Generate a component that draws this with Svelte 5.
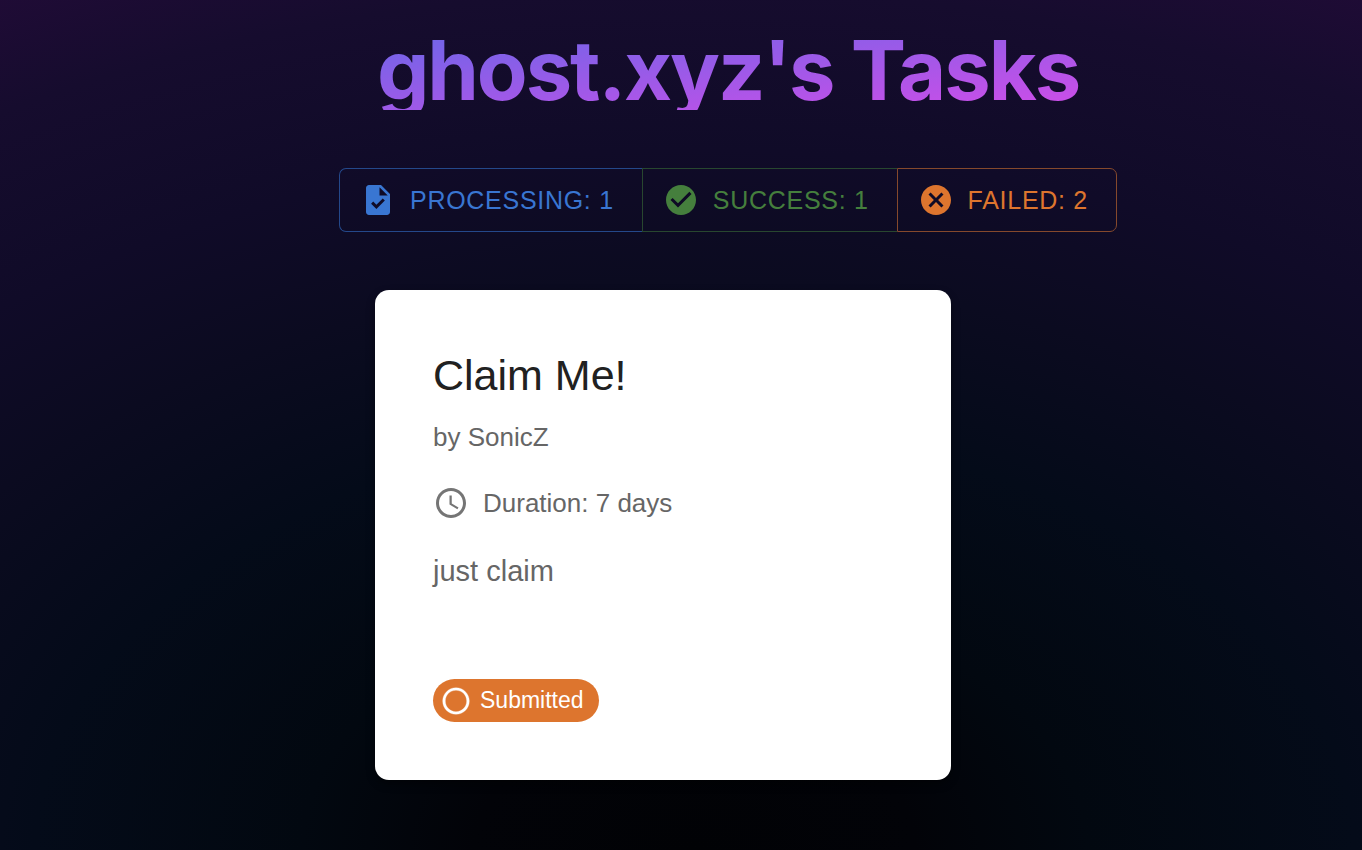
<script>
  const stats = [
    { label: 'Processing', count: 1, kind: 'processing', icon: 'M14 2H6c-1.1 0-1.990.9-1.990 2L4 20c0 1.1.890 2 1.990 2H18c1.1 0 2-.9 2-2V8l-6-6zm-3.060 16L7.400 14.460l1.410-1.410 2.120 2.120 4.240-4.240 1.410 1.410L10.940 18zM13 9V3.500L18.500 9H13z' },
    { label: 'Success', count: 1, kind: 'success', icon: 'M12 2C6.480 2 2 6.480 2 12s4.480 10 10 10 10-4.480 10-10S17.520 2 12 2zm-2 15l-5-5 1.410-1.410L10 14.170l7.590-7.590L19 8l-9 9z' },
    { label: 'Failed', count: 2, kind: 'failed', icon: 'M12 2C6.470 2 2 6.470 2 12s4.470 10 10 10 10-4.470 10-10S17.530 2 12 2zm5 13.590L15.590 17 12 13.410 8.410 17 7 15.590 10.590 12 7 8.410 8.410 7 12 10.590 15.590 7 17 8.410 13.410 12 17 15.590z' }
  ];
</script>

<main>
  <h1>ghost.xyz's Tasks</h1>

  <div class="stats" role="group" aria-label="Task totals">
    {#each stats as stat}
      <button class={stat.kind} type="button">
        <svg viewBox="0 0 24 24" aria-hidden="true"><path d={stat.icon} /></svg>
        <span>{stat.label}: {stat.count}</span>
      </button>
    {/each}
  </div>

  <section class="tasks">
    <article>
      <h2>Claim Me!</h2>
      <p class="author">by SonicZ</p>
      <p class="duration">
        <svg viewBox="0 0 24 24" aria-hidden="true">
          <path d="M11.990 2C6.470 2 2 6.480 2 12s4.470 10 9.990 10C17.520 22 22 17.520 22 12S17.520 2 11.990 2zM12 20c-4.420 0-8-3.580-8-8s3.580-8 8-8 8 3.580 8 8-3.580 8-8 8z" />
          <path d="M12.500 7H11v6l5.250 3.150.750-1.230-4.500-2.670z" />
        </svg>
        <span>Duration: 7 days</span>
      </p>
      <p class="description">just claim</p>
      <div class="chip">
        <svg viewBox="0 0 24 24" aria-hidden="true">
          <path d="M12 2C6.480 2 2 6.480 2 12s4.480 10 10 10 10-4.480 10-10S17.520 2 12 2zm0 18c-4.420 0-8-3.580-8-8s3.580-8 8-8 8 3.580 8 8-3.580 8-8 8z" />
        </svg>
        <span>Submitted</span>
      </div>
    </article>
  </section>
</main>

<style>
  :global(body) {
    margin: 0;
    background: #000;
  }

  main {
    box-sizing: border-box;
    min-height: 100vh;
    padding: 30px 0 70px 94px;
    display: flex;
    flex-direction: column;
    align-items: center;
    font-family: "Liberation Sans", Helvetica, Arial, sans-serif;
    background: radial-gradient(ellipse 1570px 1000px at 51% 100%, #010205 0%, #020308 14%, #020810 25%, #040b19 42%, #0b0b20 57%, #100b28 70%, #160c2e 86%, #220b38 99%);
  }

  h1, h2, p {
    margin: 0;
  }

  h1 {
    font: 700 83px/80px Inter, sans-serif;
    letter-spacing: -0.025em;
    color: transparent;
    background: linear-gradient(to bottom right, #6b66e8, #cf4de8);
    background-clip: text;
    -webkit-background-clip: text;
  }

  .stats {
    display: flex;
    margin: 58px 0;
  }

  button {
    display: flex;
    align-items: center;
    gap: 14px;
    height: 64px;
    padding: 0 28px 0 20px;
    border: 1px solid;
    background: none;
    font: 400 25px/44px "Liberation Sans", Helvetica, Arial, sans-serif;
    letter-spacing: 0.02857em;
    text-transform: uppercase;
  }

  button:not(:last-child) {
    border-right: 0;
  }

  button:first-child {
    border-radius: 7px 0 0 7px;
  }

  button:last-child {
    border-radius: 0 7px 7px 0;
  }

  .processing {
    color: #3976d2;
    border-color: #24488a;
  }

  .success {
    color: #457f3d;
    border-color: #28472f;
  }

  .failed {
    color: #dd752e;
    border-color: #85492c;
  }

  svg {
    flex: none;
    width: 36px;
    height: 36px;
    fill: currentColor;
  }

  .tasks {
    width: 100%;
    max-width: 706px;
  }

  article {
    box-sizing: border-box;
    max-width: 576px;
    padding: 56px 58px 58px;
    border-radius: 14px;
    background: #fff;
    color: #666;
    box-shadow: 0 4px 8px rgb(0 0 0 / 40%);
  }

  h2 {
    font-size: 43px;
    font-weight: 400;
    line-height: 58px;
    color: #212121;
  }

  .author {
    margin-top: 15px;
    font-size: 26px;
    line-height: 36px;
  }

  .duration {
    display: flex;
    align-items: center;
    gap: 14px;
    margin-top: 30px;
    font-size: 26px;
    line-height: 36px;
  }

  .duration svg {
    color: #757575;
  }

  .description {
    margin-top: 29px;
    font-size: 29px;
    line-height: 43px;
  }

  .chip {
    display: inline-flex;
    align-items: center;
    gap: 8px;
    height: 43px;
    margin-top: 86px;
    padding: 0 15px 0 7px;
    border-radius: 22px;
    background: #dd752e;
    color: #fff;
    font-size: 23px;
  }

  .chip svg {
    width: 32px;
    height: 32px;
    stroke: currentColor;
    stroke-width: 0.2;
  }
</style>
